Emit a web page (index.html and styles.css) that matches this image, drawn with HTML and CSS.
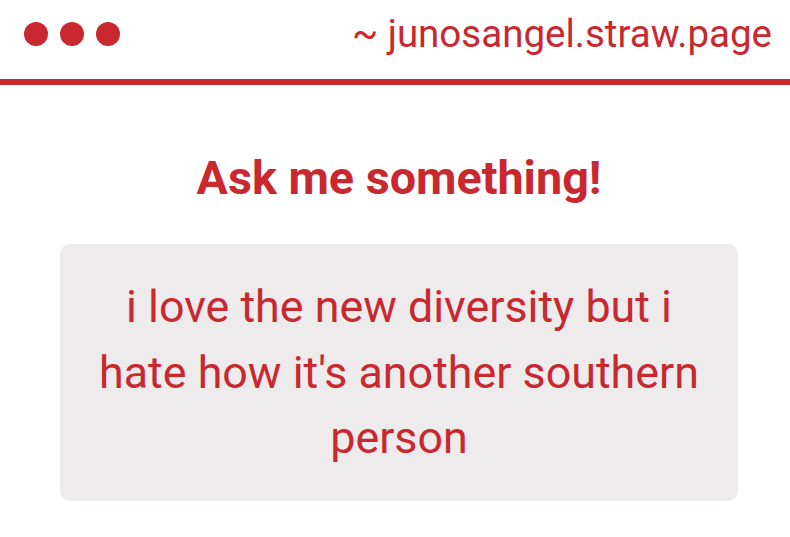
FILE: index.html
```html
<!DOCTYPE html>
<html lang="en">

<head>
    <meta charset="UTF-8" />
    <meta name="viewport" content="width=device-width, initial-scale=1.0" />
    <title>junosangel.straw.page</title>
    <link rel="stylesheet" href="styles.css">
</head>

<body>
    <!-- Window bar -->
    <header class="topbar">
        <div class="dots">
            <span class="dot"></span>
            <span class="dot"></span>
            <span class="dot"></span>
        </div>
        <div class="url">~ junosangel.straw.page</div>
    </header>

    <!-- Question -->
    <main class="content">
        <h1>Ask me something!</h1>
        <div class="question">
            <p>i love the new diversity but i hate how it's another southern person</p>
        </div>
    </main>
</body>

</html>
```

FILE: styles.css
```css
body {
    font-family: Roboto, "Liberation Sans", sans-serif;
    background-color: #fff;
    color: #c8282e;
    margin: 0;
}

.topbar {
    display: flex;
    align-items: center;
    justify-content: space-between;
    height: 85px;
    padding: 0 18px 12px 24px;
    border-bottom: 6px solid #c8282e;
    box-sizing: border-box;
}

.dots {
    display: flex;
    gap: 12px;
}

.dot {
    width: 24px;
    height: 24px;
    border-radius: 50%;
    background-color: #c8282e;
}

.url {
    font-size: 38.5px;
}

.content {
    margin: 0 52px 0 60px;
}

h1 {
    font-size: 46.7px;
    font-weight: 700;
    text-align: center;
    margin: 65px 0 38px;
    line-height: 1.2;
}

.question {
    background-color: #edebec;
    border-radius: 10px;
    padding: 30px;
    text-align: center;
}

.question p {
    margin: 0;
    font-size: 44.8px;
    line-height: 65.5px;
}
```
